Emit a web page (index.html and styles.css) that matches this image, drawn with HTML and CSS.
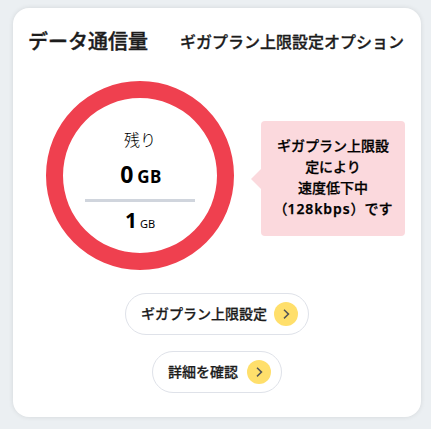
FILE: index.html
```html
<!doctype html>
<html lang="ja">
<head>
  <meta charset="utf-8">
  <meta name="viewport" content="width=device-width,initial-scale=1">
  <title>データ通信量</title>
  <link rel="stylesheet" href="styles.css">
</head>
<body>
  <section class="card">
    <header class="card-header">
      <h2 class="title">データ通信量</h2>
      <p class="plan">ギガプラン上限設定オプション</p>
    </header>

    <div class="usage">
      <div class="ring">
        <span class="label">残り</span>
        <p class="remain">0<span class="unit">GB</span></p>
        <p class="total">1<span class="unit">GB</span></p>
      </div>
      <div class="notice">
        <p>ギガプラン上限設<br>定により<br>速度低下中<br><span class="speed">（<span class="latin">128kbps</span>）です</span></p>
      </div>
    </div>

    <div class="actions">
      <a class="btn" href="#">
        <span class="btn-text">ギガプラン上限設定</span>
        <svg class="arrow" viewBox="0 0 24 24"><circle cx="12" cy="12" r="12"/><path d="M10 7.8l4.5 4.3-4.5 4.3"/></svg>
      </a>
      <a class="btn btn-detail" href="#">
        <span class="btn-text">詳細を確認</span>
        <svg class="arrow" viewBox="0 0 24 24"><circle cx="12" cy="12" r="12"/><path d="M10 7.8l4.5 4.3-4.5 4.3"/></svg>
      </a>
    </div>
  </section>
</body>
</html>
```

FILE: styles.css
```css
:root{ --red:#ef404f; --pink:#fbd9dd; --yellow:#ffdf6b; --bg:#ebeff2; --border:#dfe2e9; --text:#1c1c1c; }
*{ box-sizing:border-box; }
body{ margin:0; padding:8px 10px 12px 13px; background:var(--bg); color:var(--text); font-family:"Noto Sans","Noto Sans CJK JP",sans-serif; overflow:hidden; }
h2, p{ margin:0; }
.card{ height:409px; padding:19px 16px 0 15px; background:#fff; border-radius:16px; box-shadow:0 0 5px rgba(0,0,0,.1); width:408px; }
.card-header{ display:flex; justify-content:space-between; align-items:center; height:30px; padding-right:1px; white-space:nowrap; }
.title{ font-size:20px; line-height:30px; font-weight:500; -webkit-text-stroke:.4px; }
.plan{ font-size:16px; line-height:30px; font-weight:500; -webkit-text-stroke:.3px; }

.usage{ display:flex; align-items:flex-start; margin-top:24px; padding-left:18px; }
.ring{ display:flex; flex-direction:column; flex-shrink:0; align-items:center; width:188px; height:189px; padding-top:30px; border:17px solid var(--red); border-radius:50%; color:#000; }
.label{ font-size:16px; line-height:24px; font-weight:300; }
.remain{ width:110px; height:50px; padding-left:2px; border-bottom:3px solid #d0d5dd; text-align:center; font-size:23px; line-height:45px; font-weight:700; }
.remain .unit{ margin-left:4px; font-size:17px; letter-spacing:.4px; }
.total{ font-size:21px; line-height:36px; font-weight:700; }
.total .unit{ margin-left:3px; font-size:11px; font-weight:400; }

.notice{ position:relative; flex-shrink:0; width:144px; height:115px; margin:40px 0 0 27px; padding:14px 16px; background:var(--pink); border-radius:4px; color:#000; font-size:14px; line-height:21px; font-weight:500; text-align:center; white-space:nowrap; -webkit-text-stroke:.25px; }
.notice::before{ content:''; position:absolute; left:-10px; top:48px; border:10px solid transparent; border-right-color:var(--pink); border-left:0; }
.speed{ display:inline-block; margin:0 -10px; }
.latin{ font-weight:600; letter-spacing:.9px; }

.actions{ display:flex; flex-direction:column; align-items:center; gap:16px; margin:23px -1px 0 0; }
.btn{ display:flex; justify-content:space-between; align-items:center; width:184px; height:42px; padding:0 10px 0 15px; border:1px solid var(--border); border-radius:21px; color:var(--text); font-size:14px; line-height:20px; font-weight:500; text-decoration:none; white-space:nowrap; -webkit-text-stroke:.25px; }
.btn-detail{ width:130px; }
.arrow{ width:24px; height:24px; }
.arrow circle{ fill:var(--yellow); }
.arrow path{ fill:none; stroke:#555; stroke-width:1.5; }
```
